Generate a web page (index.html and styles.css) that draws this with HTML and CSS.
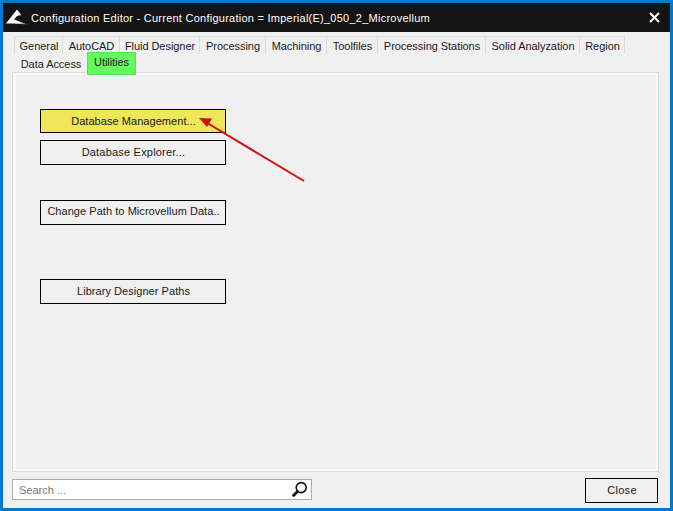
FILE: index.html
```html
<!DOCTYPE html>
<html lang="en">
<head>
<meta charset="utf-8">
<title>Configuration Editor</title>
<link rel="stylesheet" href="styles.css">
</head>
<body>
<div class="window">
  <header class="titlebar">
    <svg class="logo" width="24" height="18" viewBox="0 0 24 18"><defs><linearGradient id="fade" x1="0" x2="1" y1="0" y2="0"><stop offset="0.55" stop-color="#fff"/><stop offset="1" stop-color="#fff" stop-opacity="0.15"/></linearGradient></defs><path d="M0 14.5 L11 .5 L15.5 6 L11 7 L8 10.5 L22 15.5 L8 14.5 Z" fill="url(#fade)"/></svg>
    <span class="title">Configuration Editor - Current Configuration = Imperial(E)_050_2_Microvellum</span>
    <svg class="close-x" width="11" height="11" viewBox="0 0 11 11"><path d="M1 1 L10 10 M10 1 L1 10" stroke="#fff" stroke-width="2"/></svg>
  </header>
  <main class="body">
    <nav class="tabs">
      <div class="tab-row">
        <span class="tab w-general">General</span>
        <span class="tab w-autocad">AutoCAD</span>
        <span class="tab w-fluid">Fluid Designer</span>
        <span class="tab w-processing">Processing</span>
        <span class="tab w-machining">Machining</span>
        <span class="tab w-toolfiles">Toolfiles</span>
        <span class="tab w-stations">Processing Stations</span>
        <span class="tab w-solid">Solid Analyzation</span>
        <span class="tab w-region">Region</span>
      </div>
      <div class="tab-row">
        <span class="tab plain w-data">Data Access</span>
        <span class="tab active w-utilities">Utilities</span>
      </div>
    </nav>
    <section class="panel">
      <button class="btn highlight">Database Management...</button>
      <button class="btn explorer">Database Explorer...</button>
      <button class="btn path">Change Path to Microvellum Data..</button>
      <button class="btn library">Library Designer Paths</button>
    </section>
    <footer class="footer">
      <div class="search">
        <span class="placeholder">Search ...</span>
        <svg width="17" height="17" viewBox="0 0 17 17"><circle cx="10.2" cy="6.6" r="5" fill="none" stroke="#111" stroke-width="1.6"/><path d="M6.6 10.4 L1.8 15.2" stroke="#111" stroke-width="2.8"/></svg>
      </div>
      <button class="close-btn">Close</button>
    </footer>
  </main>
  <svg class="arrow" width="120" height="75" viewBox="0 0 120 75"><path d="M106 66 L10 8.5" stroke="#d01010" stroke-width="2" fill="none"/><path d="M1 3 L14 3.5 L9 12 Z" fill="#d01010"/></svg>
</div>
</body>
</html>
```
FILE: styles.css
```css
* { box-sizing: border-box; }
html, body { margin: 0; padding: 0; }
body { width: 673px; height: 511px; overflow: hidden; font-family: "Liberation Sans", Arial, sans-serif; font-size: 11px; color: #1a1a1a; }
.window { position: relative; width: 673px; height: 511px; border: 3px solid #0078d0; background: #f0f0f0; display: flex; flex-direction: column; }
.titlebar { height: 29px; flex: none; background: #141414; color: #fff; display: flex; align-items: center; padding: 0 10px 0 3px; }
.logo { flex: none; }
.title { flex: 1; margin-left: 1px; font-size: 11px; letter-spacing: 0.25px; white-space: nowrap; }
.close-x { flex: none; }
.body { flex: 1; display: flex; flex-direction: column; padding: 4px 11px 0 9px; min-height: 0; }
.tabs { flex: none; height: 36px; padding-left: 2px; }
.tab-row { display: flex; height: 18px; }
.tab { display: flex; align-items: center; justify-content: center; height: 18px; border: 1px solid #dcdcdc; border-left: 0; border-bottom: 0; white-space: nowrap; font-size: 11px; letter-spacing: -0.05px; padding: 0 0 0 1px; }
.tab:first-child { border-left: 1px solid #dcdcdc; }
.tab.plain { border: 0; padding-top: 2px; }
.tab.active { position: relative; z-index: 1; height: 23px; margin-top: -2px; background: #66fb5d; border: 1px solid #52e84c; padding: 0 0 3px; }
.w-general { width: 49px; } .w-autocad { width: 57px; } .w-fluid { width: 80px; }
.w-processing { width: 66px; } .w-machining { width: 61px; } .w-toolfiles { width: 51px; }
.w-stations { width: 108px; } .w-solid { width: 94px; } .w-region { width: 45px; }
.w-data { width: 73px; } .w-utilities { width: 49px; }
.panel { flex: none; width: 647px; height: 400px; border: 1px solid #dcdcdc; box-shadow: inset 3px 2px 0 #fafafa, inset -2px -2px 0 #fafafa; padding: 36px 0 0 27px; display: flex; flex-direction: column; align-items: flex-start; }
.btn { width: 186px; height: 25px; flex: none; padding: 0 0 2px 1px; border: 1px solid #000; background: #f0f0f0; color: #1a1a1a; font: 11px "Liberation Sans", Arial, sans-serif; letter-spacing: 0.05px; white-space: nowrap; }
.btn.highlight { height: 24px; background: #f0e65a; padding-bottom: 0; }
.btn.explorer { margin-top: 7px; letter-spacing: 0.2px; }
.btn.path { margin-top: 35px; padding-bottom: 3px; }
.btn.library { margin-top: 54px; }
.footer { flex: none; display: flex; justify-content: space-between; align-items: flex-start; padding: 6px 1px 0 0; }
.search { width: 300px; height: 21px; margin-top: 1px; border: 1px solid #ababab; background: #fff; display: flex; align-items: center; justify-content: space-between; padding: 0 3px 0 6px; }
.placeholder { color: #7a7a7a; font-size: 11px; }
.close-btn { width: 73px; height: 25px; border: 1px solid #000; background: #f0f0f0; color: #1a1a1a; font: 11px "Liberation Sans", Arial, sans-serif; letter-spacing: 0.3px; padding: 0 0 2px 1px; }
.arrow { position: absolute; left: 195px; top: 112px; }
```
